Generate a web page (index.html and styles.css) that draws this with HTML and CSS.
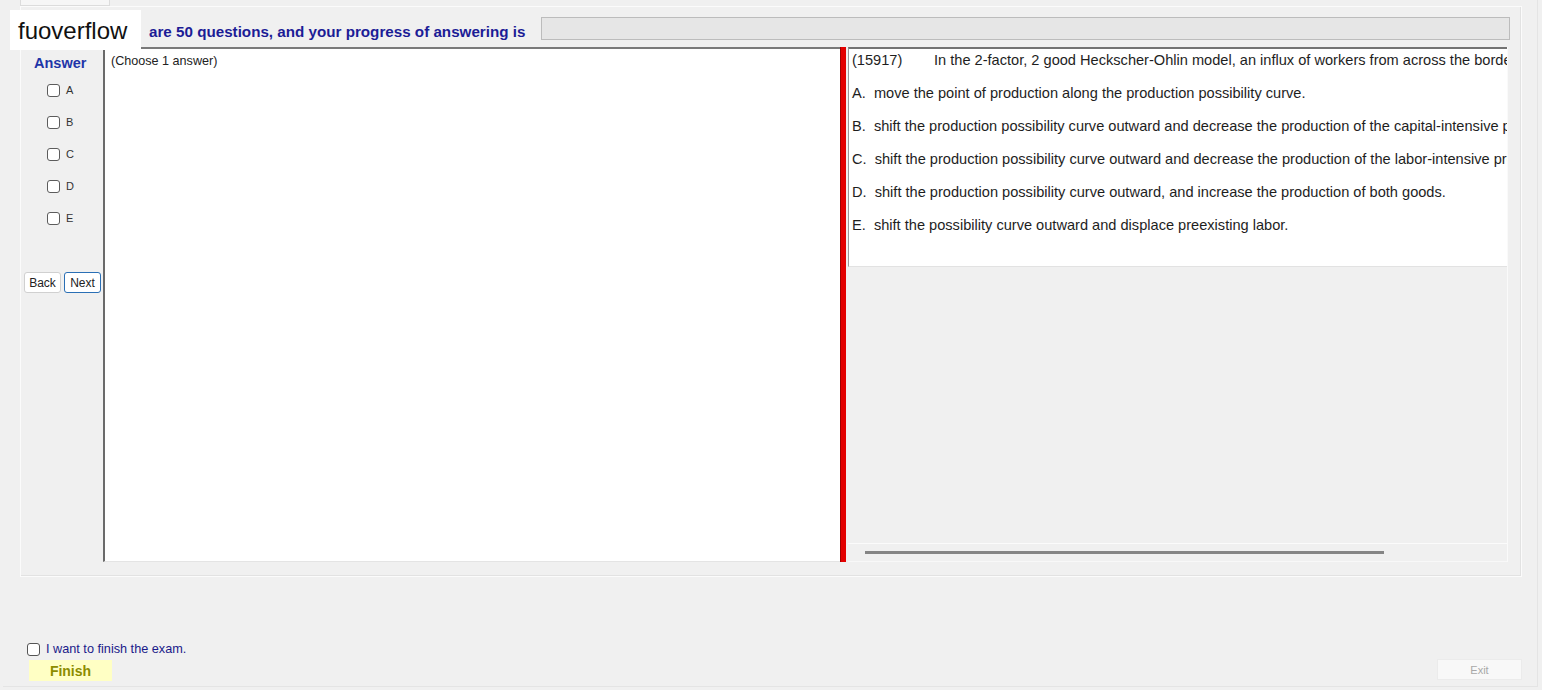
FILE: index.html
```html
<!DOCTYPE html>
<html lang="en">
<head>
    <meta charset="UTF-8">
    <title>Exam</title>
    <link rel="stylesheet" href="styles.css">
</head>
<body>
    <div class="shell">
        <div class="tab"></div>
        <div class="exam">
            <div class="progress-row">
                <span class="progress-text">are 50 questions, and your progress of answering is</span>
                <div class="progress-bar"></div>
            </div>
            <div class="main-row">
                <div class="answer-col">
                    <div class="answer-title">Answer</div>
                    <label class="choice"><input type="checkbox"> A</label>
                    <label class="choice"><input type="checkbox"> B</label>
                    <label class="choice"><input type="checkbox"> C</label>
                    <label class="choice"><input type="checkbox"> D</label>
                    <label class="choice"><input type="checkbox"> E</label>
                    <div class="nav-btns">
                        <button class="nav-btn">Back</button>
                        <button class="nav-btn focused">Next</button>
                    </div>
                </div>
                <div class="notes">(Choose 1 answer)</div>
                <div class="splitter"></div>
                <div class="question-pane">
                    <div class="question-box">
                        <div class="question"><span class="qid">(15917)</span>In the 2-factor, 2 good Heckscher-Ohlin model, an influx of workers from across the border will</div>
                        <div class="options">
                            <div class="option">A.  move the point of production along the production possibility curve.</div>
                            <div class="option">B.  shift the production possibility curve outward and decrease the production of the capital-intensive product.</div>
                            <div class="option">C.  shift the production possibility curve outward and decrease the production of the labor-intensive product.</div>
                            <div class="option">D.  shift the production possibility curve outward, and increase the production of both goods.</div>
                            <div class="option">E.  shift the possibility curve outward and displace preexisting labor.</div>
                        </div>
                    </div>
                    <div class="hscroll"><div class="hscroll-thumb"></div></div>
                </div>
            </div>
        </div>
        <div class="footer">
            <div class="finish-group">
                <label class="finish-check"><input type="checkbox"> I want to finish the exam.</label>
                <button class="finish-btn">Finish</button>
            </div>
            <button class="exit-btn">Exit</button>
        </div>
        <div class="brand">fuoverflow</div>
    </div>
</body>
</html>
```

FILE: styles.css
```css
body {
    margin: 0;
    background: #f0f0f0;
    font-family: 'Liberation Sans', Arial, sans-serif;
    color: #222;
}

.shell {
    position: relative;
    width: 1535px;
    height: 687px;
    margin-left: 3px;
    border-right: 1px solid #e4e4e4;
    border-bottom: 1px solid #e4e4e4;
    box-sizing: border-box;
}

.tab {
    width: 90px;
    height: 6px;
    margin-left: 17px;
    box-sizing: border-box;
    border: 1px solid #dcdcdc;
    border-top: none;
    background: #f6f6f6;
}

.exam {
    width: 1502px;
    height: 571px;
    margin-left: 17px;
    box-sizing: border-box;
    border: 1px solid #fbfbfb;
    box-shadow: inset -1px -1px 0 #e2e2e2;
    padding: 10px 0 0 3px;
}

/* progress header */
.progress-row {
    display: flex;
    align-items: flex-end;
    height: 23px;
    margin-bottom: 7px;
}

.progress-text {
    margin-left: 125px;
    font-size: 15.2px;
    line-height: 17px;
    font-weight: bold;
    color: #1c1c96;
    white-space: nowrap;
}

.progress-bar {
    flex: 1;
    margin: 0 11px 0 16px;
    height: 23px;
    box-sizing: border-box;
    border: 1px solid #bcbcbc;
    background: #e6e6e6;
}

/* main area */
.main-row {
    display: flex;
    height: 515px;
}

.answer-col {
    width: 79px;
    flex-shrink: 0;
    display: flex;
    flex-direction: column;
}

.answer-title {
    margin: 8px 0 0 10px;
    font-size: 14.5px;
    font-weight: bold;
    color: #1f35a8;
    height: 16px;
}

.choice {
    display: flex;
    align-items: center;
    height: 32px;
    margin-left: 23px;
    font-size: 11px;
    color: #333;
    margin-top: -4px;
    margin-bottom: 4px;
}

.choice:first-of-type {
    margin-top: 3px;
}

input[type="checkbox"] {
    appearance: none;
    width: 13px;
    height: 13px;
    margin: 0 6px 0 0;
    box-sizing: border-box;
    border: 1px solid #5c5c5c;
    border-radius: 3px;
    background: #fff;
}

.nav-btns {
    display: flex;
    gap: 3px;
    margin-top: 34px;
}

.nav-btn {
    width: 37px;
    height: 21px;
    padding: 0;
    font-family: inherit;
    font-size: 12px;
    color: #222;
    background: #fff;
    border: 1px solid #d0d0d0;
    border-radius: 3px;
}

.nav-btn.focused {
    border-color: #2a6fb5;
}

.notes {
    width: 737px;
    flex-shrink: 0;
    box-sizing: border-box;
    background: #fff;
    border-left: 2px solid #6a6a6a;
    border-top: 2px solid #7a7a7a;
    border-bottom: 1px solid #e4e4e4;
    padding: 5px 0 0 6px;
    font-size: 12.6px;
    color: #222;
}

.splitter {
    width: 6px;
    flex-shrink: 0;
    background: #e30000;
    border-left: 1px solid #a00000;
    box-sizing: border-box;
}

.question-pane {
    width: 662px;
    flex-shrink: 0;
    display: flex;
    flex-direction: column;
    box-sizing: border-box;
    padding-left: 2px;
    border-right: 1px solid #fafafa;
}

.question-box {
    height: 220px;
    box-sizing: border-box;
    background: #fff;
    border-top: 2px solid #737373;
    border-left: 1px solid #9a9a9a;
    border-bottom: 1px solid #e2e2e2;
    padding-left: 3px;
    overflow: hidden;
    white-space: nowrap;
    font-size: 14.6px;
    color: #1e1e1e;
}

.question {
    line-height: 22px;
}

.qid {
    display: inline-block;
    width: 82px;
}

.options {
    margin-top: 6px;
}

.option {
    line-height: 33px;
    white-space: pre;
}

.hscroll {
    margin-top: auto;
    height: 17px;
    border-top: 1px solid #fbfbfb;
    border-bottom: 1px solid #f8f8f8;
    display: flex;
    align-items: center;
}

.hscroll-thumb {
    margin-left: 17px;
    width: 519px;
    height: 3px;
    background: #858585;
}

/* footer */
.footer {
    display: flex;
    justify-content: space-between;
    align-items: flex-end;
    padding: 63px 15px 0 24px;
}

.finish-group {
    display: flex;
    flex-direction: column;
}

.finish-check {
    display: flex;
    align-items: center;
    height: 14px;
    margin-top: 2px;
    font-size: 12.7px;
    color: #1a1a8a;
}

.finish-check input {
    margin-right: 6px;
    border-color: #555;
}

.finish-btn {
    margin: 4px 0 0 2px;
    width: 83px;
    height: 21px;
    padding: 0;
    border: none;
    background: #ffffc4;
    font-family: inherit;
    font-size: 14px;
    font-weight: bold;
    color: #8c8c00;
}

.exit-btn {
    width: 85px;
    height: 21px;
    padding: 0;
    margin-bottom: 1px;
    border: 1px solid #ebebeb;
    background: #f8f8f8;
    font-family: inherit;
    font-size: 11px;
    color: #a8a8a8;
}

/* brand overlay */
.brand {
    position: absolute;
    left: 7px;
    top: 10px;
    width: 131px;
    height: 40px;
    box-sizing: border-box;
    padding-left: 8px;
    background: #fff;
    font-size: 24px;
    line-height: 42px;
    color: #111;
}
```
